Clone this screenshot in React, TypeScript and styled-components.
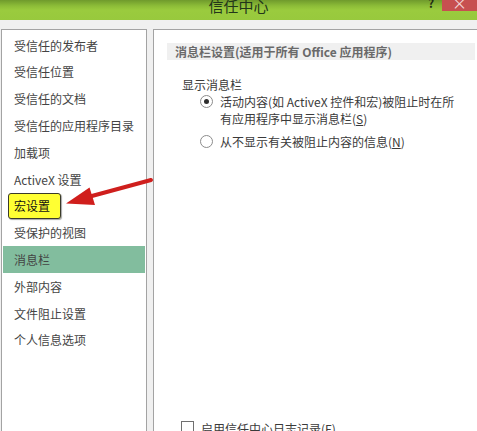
import React from "react";
import styled, { createGlobalStyle } from "styled-components";

const Global = createGlobalStyle`
  html, body { margin: 0; padding: 0; background: #f0f0f0; }
  body {
    font-family: "Noto Sans CJK SC", "Noto Sans", "Liberation Sans", sans-serif;
    -webkit-font-smoothing: antialiased;
  }
`;

const Window = styled.div`
  position: relative;
  width: 477px;
  height: 431px;
  overflow: hidden;
  background: #f0f0f0;
  display: flex;
  flex-direction: column;
`;

const TitleBar = styled.div`
  height: 20px;
  flex: none;
  display: flex;
  align-items: flex-start;
  background: linear-gradient(to bottom, #6f9a2c 0px, #8dbd38 6px, #9acb3e 10px, #98c93d 20px);
  overflow: hidden;
`;

const Spacer = styled.div`
  width: 57px;
  flex: none;
`;

const Title = styled.div`
  flex: 1;
  text-align: center;
  font-size: 15px;
  line-height: 12px;
  color: #22361a;
`;

const Controls = styled.div`
  width: 57px;
  flex: none;
  display: flex;
  align-items: flex-start;
`;

const Help = styled.div`
  width: 22px;
  text-align: center;
  font-size: 12px;
  font-weight: bold;
  line-height: 6px;
  color: #1f2a14;
`;

const Close = styled.div`
  width: 35px;
  height: 11px;
  background: #c75050;
  color: #f3d8d8;
  font-size: 15px;
  line-height: 6px;
  text-align: center;
`;

const Body = styled.div`
  flex: 1;
  display: flex;
  gap: 6px;
  padding: 9px 0 0 1px;
  min-height: 0;
`;

const Sidebar = styled.div`
  width: 144px;
  flex: none;
  background: #fff;
  border: 1px solid #a3a3a3;
  border-bottom: none;
  padding-top: 1.8px;
`;

const MenuItem = styled.div<{ $selected?: boolean }>`
  height: 26.8px;
  display: flex;
  align-items: center;
  margin: 0 1px;
  padding-left: 11px;
  font-size: 12px;
  color: #444;
  white-space: nowrap;
  background: ${(p) => (p.$selected ? "#82bd9e" : "transparent")};
`;

const Callout = styled.span`
  display: inline-flex;
  align-items: center;
  height: 26px;
  box-sizing: border-box;
  margin-left: -6px;
  padding: 0 10px 0 5px;
  background: #ffff33;
  border: 1px solid #3a3a2a;
  border-radius: 3px;
  color: #111;
  box-shadow: 1px 1px 1px rgba(0, 0, 0, 0.35);
`;

const Main = styled.div`
  flex: 1;
  background: #fff;
  border-left: 1px solid #a3a3a3;
  border-top: 1px solid #a3a3a3;
  display: flex;
  flex-direction: column;
  font-size: 12px;
  color: #3a3a3a;
`;

const SectionHeader = styled.div`
  margin: 13px 2px 0 13px;
  height: 23px;
  display: flex;
  align-items: center;
  padding-left: 8px;
  background: #f0f0f0;
  font-weight: bold;
  color: #6a6a6a;
  white-space: nowrap;
`;

const Label = styled.div`
  margin-top: 15.5px;
  padding-left: 28px;
  line-height: 17px;
`;

const Option = styled.div<{ $gap?: number }>`
  display: flex;
  align-items: flex-start;
  gap: 7px;
  padding-left: 46px;
  margin-top: ${(p) => p.$gap ?? 0}px;
  line-height: 17px;
`;

const Radio = styled.span<{ $checked?: boolean }>`
  flex: none;
  width: 13px;
  height: 13px;
  margin-top: 2px;
  box-sizing: border-box;
  border-radius: 50%;
  border: 1px solid #8c8c8c;
  background: #fff;
  display: flex;
  align-items: center;
  justify-content: center;
  &::after {
    content: "";
    display: ${(p) => (p.$checked ? "block" : "none")};
    width: 5px;
    height: 5px;
    border-radius: 50%;
    background: #2e2e2e;
  }
`;

const CheckRow = styled.div`
  display: flex;
  align-items: flex-start;
  gap: 7px;
  padding-left: 27px;
  margin-top: 270px;
  line-height: 17px;
`;

const Box = styled.span`
  flex: none;
  width: 13px;
  height: 13px;
  margin-top: 1.5px;
  box-sizing: border-box;
  border: 1px solid #707070;
  background: #fff;
`;

const U = styled.span`
  text-decoration: underline;
`;

const ArrowLayer = styled.svg`
  position: absolute;
  left: 0;
  top: 0;
  pointer-events: none;
`;

const items = [
  "受信任的发布者",
  "受信任位置",
  "受信任的文档",
  "受信任的应用程序目录",
  "加载项",
  "ActiveX 设置",
  "宏设置",
  "受保护的视图",
  "消息栏",
  "外部内容",
  "文件阻止设置",
  "个人信息选项",
];

export default function App() {
  return (
    <>
      <Global />
      <Window>
        <TitleBar>
          <Spacer />
          <Title>信任中心</Title>
          <Controls>
            <Help>?</Help>
            <Close>×</Close>
          </Controls>
        </TitleBar>
        <Body>
          <Sidebar>
            {items.map((t) => (
              <MenuItem key={t} $selected={t === "消息栏"}>
                {t === "宏设置" ? <Callout>{t}</Callout> : t}
              </MenuItem>
            ))}
          </Sidebar>
          <Main>
            <SectionHeader>消息栏设置(适用于所有 Office 应用程序)</SectionHeader>
            <Label>显示消息栏</Label>
            <Option>
              <Radio $checked />
              <span>
                活动内容(如 ActiveX 控件和宏)被阻止时在所
                <br />
                有应用程序中显示消息栏(<U>S</U>)
              </span>
            </Option>
            <Option $gap={6}>
              <Radio />
              <span>
                从不显示有关被阻止内容的信息(<U>N</U>)
              </span>
            </Option>
            <CheckRow>
              <Box />
              <span>
                启用信任中心日志记录(<U>F</U>)
              </span>
            </CheckRow>
          </Main>
        </Body>
        <ArrowLayer width="477" height="431" viewBox="0 0 477 431">
          <g fill="#d01e1c" stroke="none">
            <line x1="151" y1="180" x2="90" y2="196.5" stroke="#cf1f1d" strokeWidth="4" strokeLinecap="round" />
            <polygon points="66,203.5 89.5,187.5 95,205" />
          </g>
        </ArrowLayer>
      </Window>
    </>
  );
}
